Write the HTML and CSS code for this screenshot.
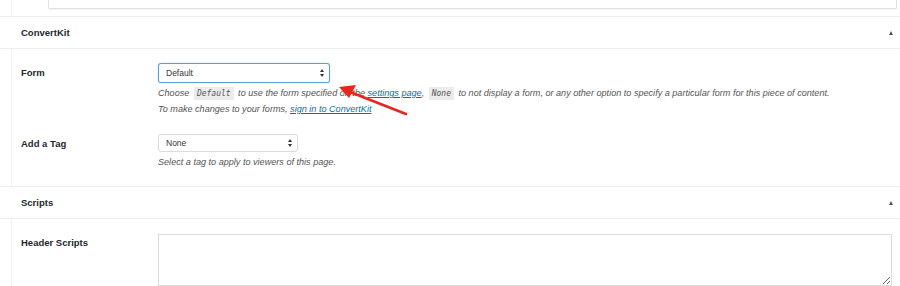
FILE: index.html
```html
<!DOCTYPE html>
<html>
<head>
	<meta charset="utf-8">
	<title>ConvertKit settings</title>
	<link rel="stylesheet" href="styles.css">
</head>
<body>
	<div class="top-area">
		<div class="top-box"></div>
	</div>

	<div class="box-head">
		<h2>ConvertKit</h2>
		<span class="toggle"></span>
	</div>
	<div class="box-body">
		<div class="row">
			<label class="label">Form</label>
			<div class="field">
				<div class="select select-focus select-form">Default<span class="arrows"></span></div>
				<p class="desc">Choose <code>Default</code> to use the form specified on the <a href="#">settings page</a>, <code>None</code> to not display a form, or any other option to specify a particular form for this piece of content.</p>
				<p class="desc">To make changes to your forms, <a href="#">sign in to ConvertKit</a></p>
			</div>
		</div>
		<div class="row">
			<label class="label">Add a Tag</label>
			<div class="field">
				<div class="select select-tag">None<span class="arrows"></span></div>
				<p class="desc">Select a tag to apply to viewers of this page.</p>
			</div>
		</div>
	</div>

	<div class="box-head">
		<h2>Scripts</h2>
		<span class="toggle"></span>
	</div>
	<div class="box-body box-last">
		<div class="row">
			<label class="label label-area">Header Scripts</label>
			<div class="field">
				<textarea class="scripts"></textarea>
			</div>
		</div>
	</div>

	<!-- annotation arrow -->
	<svg class="callout" width="900" height="286" viewBox="0 0 900 286">
		<line x1="406" y1="114" x2="350" y2="92" stroke="#e8261c" stroke-width="2.6" stroke-linecap="round"/>
		<polygon points="339,87 356,85 349,98" fill="#e8261c"/>
	</svg>
</body>
</html>
```

FILE: styles.css
```css
* {
	box-sizing: border-box;
	margin: 0;
	padding: 0;
}

html {
	overflow: hidden;
}

body {
	background: #fff;
	font-family: "Liberation Sans", Arial, sans-serif;
	color: #23282d;
	width: 900px;
	height: 286px;
	overflow: hidden;
	position: relative;
}

/* area above the first box */
.top-area {
	height: 16px;
	margin-left: 11px;
	border-left: 1px solid #f1f1f1;
}

.top-box {
	margin-left: 36px;
	width: 849px;
	height: 9px;
	border: 1px solid #e2e2e2;
	border-top: none;
	border-radius: 0 0 2px 2px;
	box-shadow: 0 1px 1px rgba(0, 0, 0, 0.06);
}

/* Box headers */
.box-head {
	height: 33px;
	border-top: 1px solid #efefef;
	border-bottom: 1px solid #efefef;
	display: flex;
	align-items: center;
	justify-content: space-between;
	padding: 0 7px 0 21px;
}

.box-head h2 {
	font-size: 9.5px;
	font-weight: 600;
}

.toggle {
	width: 0;
	height: 0;
	border-left: 2.5px solid transparent;
	border-right: 2.5px solid transparent;
	border-bottom: 4px solid #555;
}

/* Box bodies */
.box-body {
	margin-left: 11px;
	border-left: 1px solid #f1f1f1;
	padding: 14px 0 16px 9px;
}

.box-last {
	padding-top: 15px;
	padding-bottom: 0;
}

.row {
	display: grid;
	grid-template-columns: 137px 1fr;
	margin-bottom: 17px;
}

.row:last-child {
	margin-bottom: 0;
}

.label {
	font-size: 9.5px;
	font-weight: 600;
	padding-top: 4px;
}

.label-area {
	padding-top: 3px;
}

.field {
	padding-right: 8px;
}

.select {
	position: relative;
	height: 18px;
	border: 1px solid #dcdcdc;
	border-radius: 3px;
	font-size: 8.5px;
	line-height: 1;
	padding: 4px 7px;
	color: #32373c;
	background: #fff;
	margin-bottom: 2px;
}

.select-focus {
	height: 20px;
	border-color: #5b9dd9;
	box-shadow: 0 0 1px rgba(30, 140, 190, 0.6);
	padding-top: 5px;
}

.select-form {
	width: 172px;
}

.select-tag {
	width: 140px;
}

.arrows {
	position: absolute;
	right: 4px;
	top: 50%;
	margin-top: -4px;
	width: 5px;
	height: 8px;
}

.arrows::before, .arrows::after {
	content: "";
	position: absolute;
	left: 0;
	border-left: 2.5px solid transparent;
	border-right: 2.5px solid transparent;
}

.arrows::before {
	top: 0;
	border-bottom: 3px solid #333;
}

.arrows::after {
	bottom: 0;
	border-top: 3px solid #333;
}

.desc {
	font-size: 9.1px;
	font-style: italic;
	color: #555;
	line-height: 16px;
}

.desc a {
	color: #0073aa;
}

.desc code {
	font-family: "DejaVu Sans Mono", "Liberation Mono", monospace;
	font-size: 8px;
	line-height: 1;
	background: #ececec;
	padding: 2px 3px;
	margin: 0 2px;
}

.scripts {
	display: block;
	width: 734px;
	height: 52px;
	border: 1px solid #dcdcdc;
	resize: vertical;
}

/* annotation overlay */
.callout {
	position: absolute;
	left: 0;
	top: 0;
	pointer-events: none;
}
```
